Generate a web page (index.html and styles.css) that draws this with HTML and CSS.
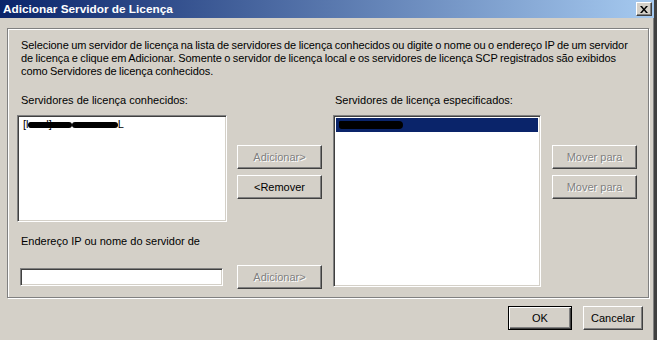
FILE: index.html
```html
<!DOCTYPE html>
<html lang="pt">
<head>
    <meta charset="UTF-8">
    <meta name="viewport" content="width=device-width, initial-scale=1.0">
    <title>Adicionar Servidor de Licença</title>
    <link rel="stylesheet" href="styles.css">
</head>
<body>
    <div class="window">
        <div class="titlebar">
            <span class="title">Adicionar Servidor de Licença</span>
            <button class="close-btn" type="button" aria-label="Fechar">
                <svg width="8" height="7" viewBox="0 0 8 7">
                    <path d="M0 0h2l2 2.5L6 0h2L5 3.5 8 7H6L4 4.5 2 7H0l3-3.5z" fill="#000"/>
                </svg>
            </button>
        </div>

        <div class="content">
            <div class="group">
                <p class="desc">Selecione um servidor de licença na lista de servidores de licença conhecidos ou digite o nome ou o endereço IP de um servidor<br>de licença e clique em Adicionar. Somente o servidor de licença local e os servidores de licença SCP registrados são exibidos<br>como Servidores de licença conhecidos.</p>

                <div class="lists">
                    <label class="caption known-label">Servidores de licença conhecidos:</label>
                    <label class="caption specified-label">Servidores de licença especificados:</label>

                    <div class="listbox known">
                        <div class="item">[local]<span class="redact r1"></span><span class="redact r2"></span>L</div>
                    </div>
                    <div class="btn-col move-col">
                        <button class="btn" type="button" disabled>Adicionar&gt;</button>
                        <button class="btn" type="button">&lt;Remover</button>
                    </div>
                    <div class="listbox specified">
                        <div class="item selected"><span class="redact r3"></span></div>
                    </div>
                    <div class="btn-col order-col">
                        <button class="btn" type="button" disabled>Mover para</button>
                        <button class="btn" type="button" disabled>Mover para</button>
                    </div>

                    <label class="caption address-label" for="address">Endereço IP ou nome do servidor de</label>
                    <input class="textbox" id="address" type="text">
                    <button class="btn add-btn" type="button" disabled>Adicionar&gt;</button>
                </div>
            </div>

            <div class="footer">
                <button class="btn default" type="button">OK</button>
                <button class="btn cancel" type="button">Cancelar</button>
            </div>
        </div>
    </div>
</body>
</html>
```

FILE: styles.css
```css
body {
    margin: 0;
    background-color: #d4d0c8;
    font-family: "Liberation Sans", Arial, sans-serif;
    font-size: 11px;
    color: #000;
}
.window {
    width: 657px;
    height: 340px;
    box-sizing: border-box;
    border-right: 3px solid #404040;
    box-shadow: inset -1px 0 #808080;
    overflow: hidden;
}
.titlebar {
    height: 18px;
    display: flex;
    align-items: center;
    justify-content: space-between;
    padding: 0 2px 0 3px;
    background: linear-gradient(to right, #0a246a, #a6caf0);
}
.title {
    color: #fff;
    font-weight: bold;
    font-size: 11.8px;
}
.close-btn {
    width: 16px;
    height: 14px;
    padding: 0;
    display: flex;
    align-items: center;
    justify-content: center;
    background-color: #d4d0c8;
    border: 1px solid;
    border-color: #fff #404040 #404040 #fff;
    box-shadow: inset -1px -1px #808080;
}
.content {
    padding: 10px 0 0 7px;
}
.group {
    width: 642px;
    height: 270px;
    box-sizing: border-box;
    border: 1px solid #808080;
    box-shadow: inset 1px 1px #fff, 1px 1px #fff;
    padding: 10px 0 0 9px;
}
.desc {
    margin: 0 0 0 4px;
    white-space: nowrap;
    letter-spacing: -0.07px;
    word-spacing: -0.5px;
    line-height: 13px;
}
.lists {
    display: grid;
    grid-template-columns: 220px 96px 219px 85px;
    grid-template-rows: 21px 107px 43px 24px;
    margin-top: 16px;
}
.caption {
    padding-left: 4px;
    line-height: 13px;
}
.known-label {
    grid-column: 1;
    grid-row: 1;
}
.specified-label {
    grid-column: 3;
    grid-row: 1;
    padding-left: 2px;
}
.listbox {
    background-color: #fff;
    box-sizing: border-box;
    border: 1px solid;
    border-color: #808080 #fff #fff #808080;
    box-shadow: inset 1px 1px #404040, inset -1px -1px #d4d0c8;
    padding: 2px;
}
.known {
    grid-column: 1;
    grid-row: 2;
    width: 210px;
    height: 107px;
}
.specified {
    grid-column: 3;
    grid-row: 2 / span 3;
    width: 208px;
    height: 172px;
}
.item {
    height: 13px;
    line-height: 13px;
    padding-left: 3px;
    display: flex;
    align-items: center;
    white-space: nowrap;
}
.item.selected {
    background-color: #0a246a;
    height: 14px;
}
.redact {
    display: inline-block;
    background-color: #000;
    height: 6px;
    border-radius: 3px;
}
.r1 {
    width: 44px;
    margin-left: -24px;
}
.r2 {
    width: 46px;
}
.r3 {
    width: 64px;
    height: 8px;
    border-radius: 2px 6px 6px 4px;
}
.btn-col {
    grid-row: 2;
    display: flex;
    flex-direction: column;
    gap: 6px;
    padding-top: 30px;
}
.move-col {
    grid-column: 2;
}
.order-col {
    grid-column: 4;
}
.btn {
    width: 85px;
    height: 24px;
    padding: 0;
    font-family: inherit;
    font-size: 11px;
    color: #000;
    background-color: #d4d0c8;
    border: 1px solid;
    border-color: #fff #404040 #404040 #fff;
    box-shadow: inset -1px -1px #808080;
}
.btn:disabled {
    color: #808080;
    text-shadow: 1px 1px #fff;
}
.address-label {
    grid-column: 1 / span 2;
    grid-row: 3;
    padding-top: 13px;
}
.textbox {
    grid-column: 1;
    grid-row: 4;
    width: 203px;
    height: 18px;
    margin: 3px 0 0 3px;
    box-sizing: border-box;
    border: 1px solid;
    border-color: #808080 #fff #fff #808080;
    box-shadow: inset 1px 1px #404040, inset -1px -1px #d4d0c8;
    font-family: inherit;
    font-size: 11px;
    padding: 0 3px;
    outline: none;
}
.add-btn {
    grid-column: 2;
    grid-row: 4;
}
.footer {
    display: flex;
    gap: 11px;
    padding: 8px 0 0 501px;
}
.btn.default {
    width: 64px;
    border: 1px solid #000;
    box-shadow: inset 1px 1px #fff, inset -1px -1px #404040, inset -2px -2px #808080;
}
.btn.cancel {
    width: 60px;
}
```
